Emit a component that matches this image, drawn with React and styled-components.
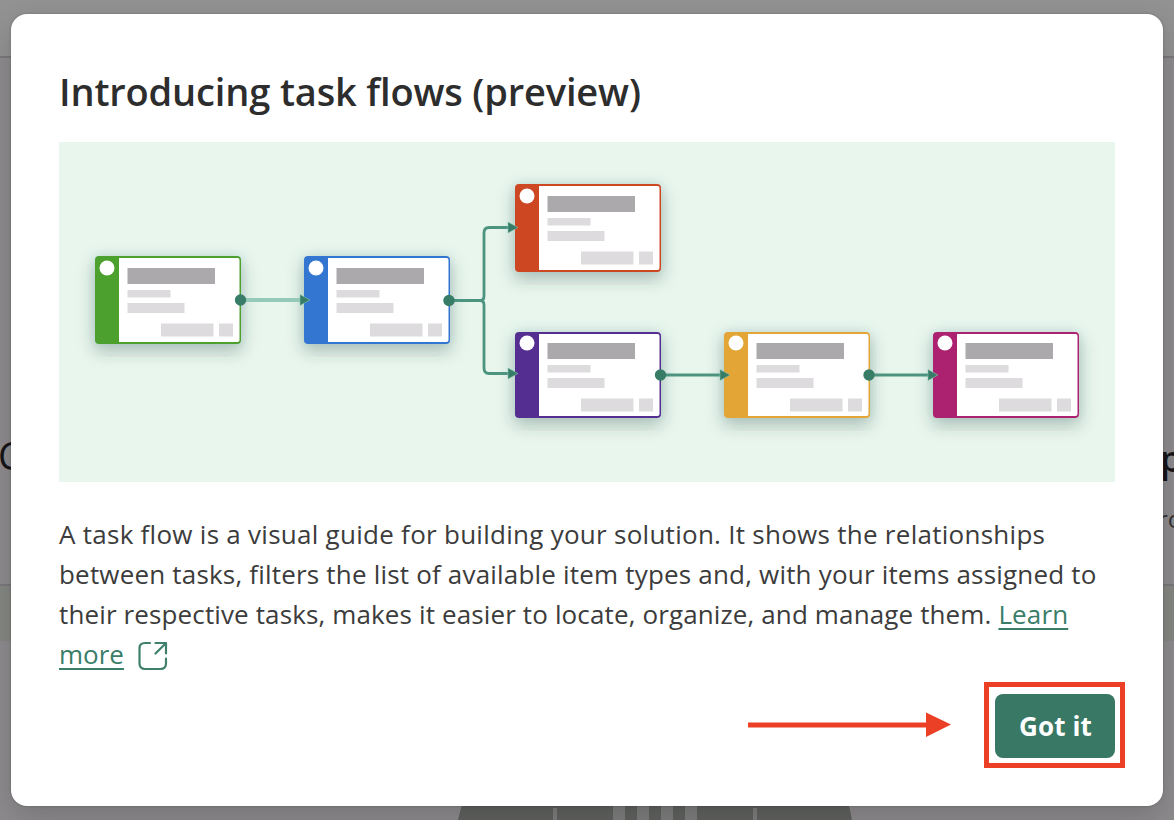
import React from 'react';
import styled, { createGlobalStyle } from 'styled-components';

const GlobalStyle = createGlobalStyle`
  * { box-sizing: border-box; }
  body {
    margin: 0;
    overflow: hidden;
    font-family: 'Open Sans', 'Noto Sans', sans-serif;
  }
`;

const Page = styled.div`
  position: relative;
  display: grid;
  width: 1174px;
  height: 820px;
  padding: 14px 11px;
  overflow: hidden;
  background: #868386;
`;

const Backdrop = styled.div`
  position: absolute;
  inset: 0;
  display: flex;
  flex-direction: column;
`;

const Band = styled.div`
  flex: none;
  height: ${(p) => p.$height}px;
  background: ${(p) => p.$color};
  border-bottom: ${(p) => (p.$line ? '2px solid #7b787b' : '0')};
`;

const Peek = styled.span`
  position: absolute;
  left: ${(p) => p.$x}px;
  top: ${(p) => p.$y}px;
  font-size: ${(p) => p.$size}px;
  font-weight: ${(p) => p.$weight || 400};
  line-height: 1;
  color: ${(p) => p.$color || '#171517'};
`;

const Device = styled.svg`
  position: absolute;
  left: 455px;
  bottom: 0;
`;

const Dialog = styled.section`
  position: relative;
  display: flex;
  flex-direction: column;
  width: 1152px;
  height: 792px;
  padding: 48px;
  border-radius: 16px;
  background: #fff;
  box-shadow: 0 0 3px rgba(0, 0, 0, 0.2), 0 12px 32px rgba(0, 0, 0, 0.16);
`;

const Title = styled.h1`
  margin: 6px 0 0;
  height: 74px;
  flex: none;
  font-size: 38px;
  line-height: 46px;
  font-weight: 600;
  letter-spacing: -0.15px;
  white-space: nowrap;
  color: #2d2d2d;
`;

const Illustration = styled.svg`
  flex: none;
  display: block;
  width: 1056px;
  height: 340px;
  background: #e8f6ee;
`;

const Copy = styled.p`
  margin: 32px 0 0;
  color: #3c3c3c;
  font-size: 26px;
  line-height: 40px;
`;

const Line = styled.span`
  display: flex;
  align-items: center;
  height: 40px;
  white-space: pre;
  letter-spacing: ${(p) => p.$spacing}px;
`;

const Link = styled.a`
  color: #3a7d69;
  text-decoration: underline;
  text-decoration-thickness: 2px;
  text-underline-offset: 4px;
`;

const OpenIcon = styled.svg`
  margin: 3px 0 0 14px;
`;

const Actions = styled.footer`
  display: flex;
  align-items: center;
  justify-content: flex-end;
  gap: 33px;
  margin: 8px -10px 0 0;
`;

const Highlight = styled.div`
  display: flex;
  padding: 7px 5px 5px 6px;
  width: 141px;
  height: 86px;
  border: 5px solid #ec4026;
`;

const Button = styled.button`
  width: 120px;
  height: 64px;
  padding: 0 0 0 1px;
  border: 0;
  border-radius: 8px;
  background: #397864;
  color: #fff;
  font: 700 26px/64px 'Open Sans', sans-serif;
  letter-spacing: 0.1px;
`;

const cards = [
  { x: 95, y: 256, h: 88, color: '#4ba02f' },
  { x: 304, y: 256, h: 88, color: '#3376d1' },
  { x: 515, y: 184, h: 88, color: '#cd4720' },
  { x: 515, y: 332, h: 86, color: '#552f91' },
  { x: 724, y: 332, h: 86, color: '#e3a535' },
  { x: 933, y: 332, h: 86, color: '#ad216f' },
];

function Card({ x, y, h, color }) {
  const d = h === 86 ? -1 : 0;
  return (
    <g transform={`translate(${x} ${y})`}>
      <rect width="146" height={h} rx="4" fill={color} filter="url(#shadow)" />
      <path d={`M24 2H142.500Q144.500 2 144.500 4V${h - 4}Q144.500 ${h - 2} 142.500 ${h - 2}H24Z`} fill="#fff" />
      <circle cx="12" cy={12 + d} r="7.500" fill="#fff" />
      <g transform={`translate(0 ${d})`} fill="#dddbde">
        <rect x="32.500" y="12" width="87.500" height="16" fill="#aba9ac" />
        <rect x="32.500" y="34" width="43" height="7.500" />
        <rect x="32.500" y="47" width="57" height="10" />
        <rect x="66" y="67.500" width="52.500" height="13" />
        <rect x="124" y="67.500" width="14" height="13" />
      </g>
    </g>
  );
}

const Dot = ({ x, y }) => <circle cx={x} cy={y} r="5.700" fill="#367c67" />;
const Head = ({ x, y }) => (
  <path d={`M${x} ${y}l-10 -5.500v11z`} fill="#367c67" stroke="#8ccbb5" strokeOpacity="0.6" strokeWidth="0.900" />
);

function TaskFlow() {
  return (
    <Illustration viewBox="59 142 1056 340">
      <defs>
        <filter id="shadow" x="-20%" y="-25%" width="140%" height="165%">
          <feDropShadow dx="0" dy="0" stdDeviation="6" floodColor="#6fa8a8" floodOpacity="0.25" />
          <feDropShadow dx="0" dy="6" stdDeviation="8" floodColor="#303b34" floodOpacity="0.32" />
        </filter>
      </defs>
      {cards.map((c) => <Card key={`${c.x}-${c.y}`} {...c} />)}
      <g fill="none" stroke="#4c9480" strokeWidth="2.800">
        <path d="M240 300H301" stroke="#95c9b8" strokeWidth="4" />
        <path d="M449 300.500H480Q484 300.500 484 296V233Q484 227.500 489 227.500H510" />
        <path d="M480 300.500Q484 300.500 484 305V368Q484 373.500 489 373.500H510" />
        <path d="M661 375H721M869 375H930" />
      </g>
      <Dot x={240.5} y={300} />
      <Dot x={449} y={300.5} />
      <Dot x={660.5} y={375} />
      <Dot x={869} y={375} />
      <Head x={310} y={300} />
      <Head x={518} y={227.5} />
      <Head x={518} y={373.5} />
      <Head x={730} y={375} />
      <Head x={938} y={375} />
    </Illustration>
  );
}

export default function App() {
  return (
    <>
      <GlobalStyle />
      <Page>
        <Backdrop>
          <Band $height={58} $color="#929292" $line />
          <Band $height={528} $color="#8e8b8e" $line />
          <Band $height={55} $color="#858783" />
          <Band $height={179} $color="#8e8b8e" />
          <Peek $x={-2} $y={436} $size={38}>C</Peek>
          <Peek $x={1160} $y={441} $size={36} $weight={600}>p</Peek>
          <Peek $x={1158} $y={507} $size={24} $color="#343236">ro</Peek>
          <Device width="400" height="20" viewBox="0 0 400 20">
            <path d="M8 0H393L397 20H3Z" fill="#60625f" />
            <path d="M158 0h12v20h-12zM182 0h12v20h-12zM206 0h12v20h-12zM230 0h12v20h-12zM98 8h4v12h-4zM298 8h4v12h-4z" fill="#7f7e7f" />
          </Device>
        </Backdrop>
        <Dialog>
          <Title>Introducing task flows (preview)</Title>
          <TaskFlow />
          <Copy>
            <Line $spacing={0.27}>A task flow is a visual guide for building your solution. It shows the relationships</Line>
            <Line $spacing={0.19}>between tasks, filters the list of available item types and, with your items assigned to</Line>
            <Line $spacing={0.13}>their respective tasks, makes it easier to locate, organize, and manage them. <Link>Learn</Link></Line>
            <Line $spacing={0}>
              <Link>more</Link>
              <OpenIcon width="30" height="30" viewBox="0 0 30 30" fill="none" stroke="#3f806c" strokeWidth="2.200" strokeLinecap="round" strokeLinejoin="round">
                <path d="M12 2H7Q1.500 2 1.500 7.500V22.500Q1.500 28 7 28H22.500Q28 28 28 22.500V17.500M17.500 2H28V12.500M28 2L17.500 12.500" />
              </OpenIcon>
            </Line>
          </Copy>
          <Actions>
            <svg width="203" height="26" viewBox="0 0 203 26" fill="#ec4026">
              <path d="M0 10.500H178V.500L203 12.500L178 25V15.500H0Z" />
            </svg>
            <Highlight><Button>Got it</Button></Highlight>
          </Actions>
        </Dialog>
      </Page>
    </>
  );
}
